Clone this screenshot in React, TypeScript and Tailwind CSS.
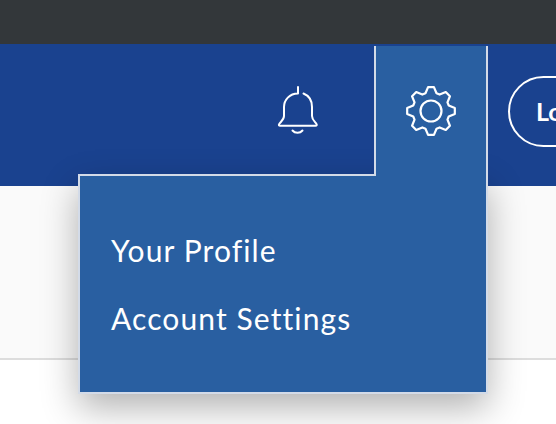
import React from "react";

const gearPath = () => {
  const cx = 26;
  const cy = 26;
  const pts: string[] = [];
  const teeth = 8;
  for (let i = 0; i < teeth; i++) {
    const a = (i * 2 * Math.PI) / teeth - Math.PI / 2;
    const step = (2 * Math.PI) / teeth;
    const list: [number, number][] = [
      [18.6, -0.24 * step * 1.6],
      [24, -0.13 * step * 1.2],
      [24, 0.13 * step * 1.2],
      [18.6, 0.24 * step * 1.6],
    ];
    list.forEach(([r, d]) => {
      pts.push(`${(cx + r * Math.cos(a + d)).toFixed(2)} ${(cy + r * Math.sin(a + d)).toFixed(2)}`);
    });
  }
  return "M" + pts.join("L") + "Z";
};

const BellIcon = () => (
  <svg width="42" height="50" viewBox="0 0 42 50" fill="none" stroke="white" strokeWidth="2" strokeLinecap="round" strokeLinejoin="round">
    <path d="M21 1v6.500C12.500 7.500 7 14 7 21v9c0 3.500-3 5.500-4.800 8-.7 1-.3 1.800 1 1.800h35.300c1.200 0 1.600-.8 1-1.800-1.800-2.500-4.500-4.500-4.500-8v-9c0-6.500-3.500-11.500-8.500-13.500" />
    <path d="M15.500 44.500c2.500 3 7.500 3 10 0" />
  </svg>
);

const GearIcon = () => (
  <svg width="52" height="52" viewBox="0 0 52 52" fill="none" stroke="white" strokeWidth="2.200" strokeLinejoin="round">
    <path d={gearPath()} />
    <circle cx="26" cy="26" r="10.500" />
  </svg>
);

export default function App() {
  return (
    <div className="relative h-[424px] w-[556px] overflow-hidden bg-white font-['Lato',sans-serif] text-white">
      <div className="h-[44px] bg-[#33373a]" />
      <header className="flex h-[142px] items-start bg-[#1a428f] pl-[277px]">
        <div className="mt-[42px] w-[42px] shrink-0">
          <BellIcon />
        </div>
        <div className="relative ml-[55px] w-[114px] shrink-0">
          <div className="relative z-10 mt-[2px] flex h-[130px] justify-center border-x-2 border-[#d3dbe8] bg-[#295fa1] pt-[39px]">
            <GearIcon />
          </div>
          <div className="absolute right-0 top-[130px] h-[220px] w-[410px] border-2 border-[#d3dbe8] bg-[#295fa1] px-[31px] pt-[40px] text-[30px] leading-[68px] tracking-[1.1px] shadow-[0_14px_34px_rgba(0,0,0,0.3)]">
            <div>Your Profile</div>
            <div>Account Settings</div>
          </div>
        </div>
        <button className="ml-[20px] mt-[32px] flex h-[71px] w-[140px] shrink-0 items-center rounded-full border-2 border-white pl-[26px] text-[25px] font-bold">
          Login
        </button>
      </header>
      <div className="h-[174px] border-b-2 border-[#dddddd] bg-[#fafafa]" />
    </div>
  );
}
